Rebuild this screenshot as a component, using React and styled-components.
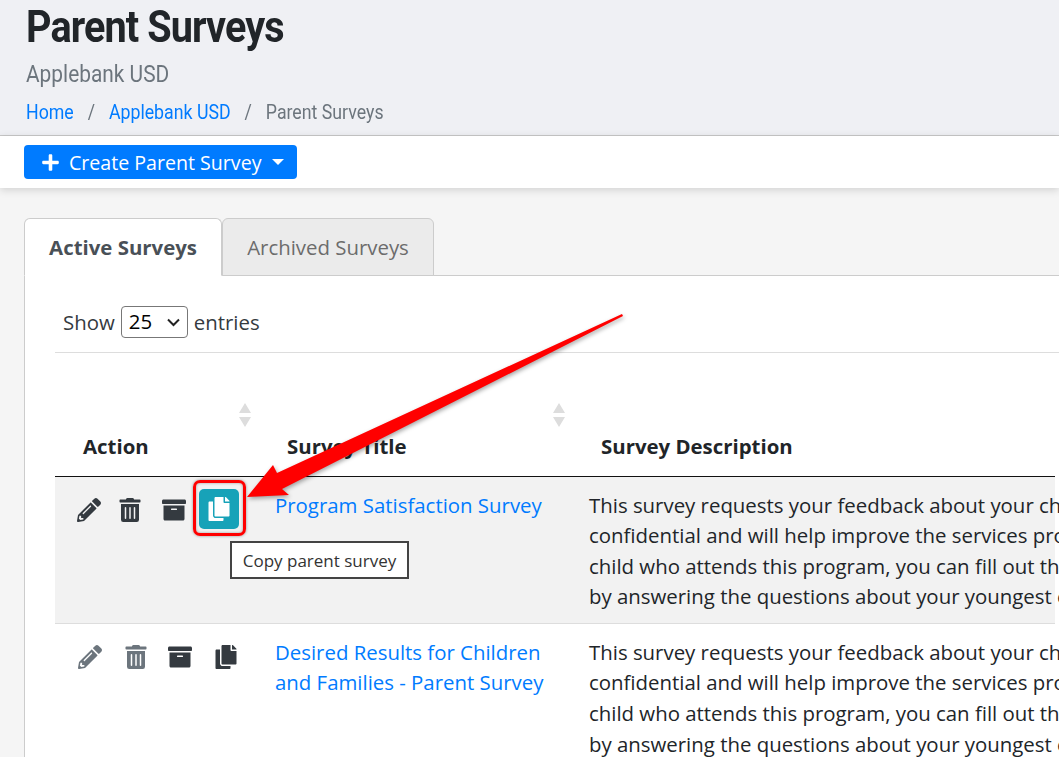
import React from 'react';
import styled, { createGlobalStyle } from 'styled-components';
import { FaPlus, FaPencilAlt, FaTrashAlt, FaArchive, FaCopy } from 'react-icons/fa';

const GlobalStyle = createGlobalStyle`
  html, body { margin: 0; padding: 0; background: #f5f5f5; }
  body { font-family: "Open Sans", "Liberation Sans", sans-serif; color: #212529; }
`;

const Page = styled.div`
  position: relative;
  width: 1059px;
  height: 757px;
  overflow: hidden;
  background: #f5f5f5;
`;

const Header = styled.header`
  height: 136px;
  box-sizing: border-box;
  padding: 0 26px;
  background: #eff0f4;
  border-bottom: 1px solid #c8c8c8;
  font-family: Roboto, sans-serif;
`;

const Title = styled.h1`
  margin: 0;
  padding-top: 1px;
  font-size: 45px;
  line-height: 52px;
  font-weight: 700;
  color: #212529;
  letter-spacing: -1px;
  transform: scaleX(0.88);
  transform-origin: left;
  white-space: nowrap;
`;

const Subtitle = styled.div`
  margin-top: 8px;
  font-size: 24px;
  line-height: 26px;
  color: #6c757d;
  transform: scaleX(0.87);
  transform-origin: left;
`;

const Crumbs = styled.nav`
  display: flex;
  margin-top: 13px;
  font-size: 20.4px;
  line-height: 24px;
  color: #6c757d;
  transform: scaleX(0.87);
  transform-origin: left;
  white-space: nowrap;
`;

const Crumb = styled.a`
  color: #007bff;
`;

const Sep = styled.span`
  padding: 0 16px;
`;

const Toolbar = styled.div`
  position: relative;
  height: 52px;
  box-sizing: border-box;
  padding: 9px 24px;
  background: #fff;
  box-shadow: 0 2px 8px rgba(0, 0, 0, 0.15);
`;

const CreateButton = styled.button`
  display: flex;
  align-items: center;
  width: 273px;
  height: 34px;
  padding: 0 0 0 17px;
  border: 0;
  border-radius: 4px;
  background: #007bff;
  color: #fff;
  font: 19.6px "Open Sans", sans-serif;
  svg { font-size: 19px; margin-right: 9px; }
`;

const Caret = styled.span`
  margin-left: 11px;
  border-top: 6px solid #fff;
  border-left: 6px solid transparent;
  border-right: 6px solid transparent;
`;

const Content = styled.main`
  padding: 30px 0 0 24px;
`;

const Tabs = styled.div`
  display: flex;
  position: relative;
  z-index: 1;
  margin-bottom: -1px;
`;

const Tab = styled.div`
  box-sizing: border-box;
  height: 58px;
  width: ${p => p.$w}px;
  margin-right: ${p => p.$gap || 0}px;
  display: flex;
  align-items: center;
  justify-content: center;
  font-size: 20.4px;
  border: 1px solid #ccc;
  border-radius: 6px 6px 0 0;
  color: ${p => (p.$active ? '#495057' : '#6c6c6c')};
  background: ${p => (p.$active ? '#fff' : '#ebebeb')};
  font-weight: ${p => (p.$active ? 700 : 400)};
  border-bottom-color: ${p => (p.$active ? '#fff' : '#ccc')};
`;

const Card = styled.section`
  box-sizing: border-box;
  height: 600px;
  padding: 0 0 0 30px;
  background: #fff;
  border: 1px solid #ccc;
  border-right: 0;
`;

const LengthRow = styled.div`
  box-sizing: border-box;
  height: 77px;
  padding: 16px 0 0 8px;
  display: flex;
  align-items: center;
  gap: 6px;
  font-size: 20.4px;
  color: #343a40;
  border-bottom: 1px solid #ddd;
`;

const LengthSelect = styled.div`
  position: relative;
  box-sizing: border-box;
  width: 67px;
  height: 32px;
  padding-left: 7px;
  border: 1px solid #777;
  border-radius: 4px;
  line-height: 29px;
  color: #000;
  svg { position: absolute; right: 6px; top: 11px; }
`;

const Table = styled.table`
  border-collapse: collapse;
  table-layout: fixed;
  width: 1000px;
`;

const HeadCell = styled.th`
  position: relative;
  height: 123px;
  box-sizing: border-box;
  vertical-align: bottom;
  padding: 0 0 16px ${p => p.$pad || 24}px;
  text-align: left;
  font-size: 20.4px;
  font-weight: 700;
  color: #212529;
  border-bottom: 1px solid #111;
`;

const SortIcon = styled.svg`
  position: absolute;
  right: 11px;
  top: 50px;
`;

const Row = styled.tr`
  background: ${p => (p.$striped ? '#f2f2f2' : '#fff')};
  border-bottom: 1px solid #ddd;
`;

const Cell = styled.td`
  vertical-align: top;
  padding: 13px 12px 11px;
  font-size: 20.4px;
  line-height: 30.6px;
  color: #212529;
  white-space: nowrap;
`;

const TitleLink = styled.a`
  color: #007bff;
`;

const Actions = styled.div`
  display: flex;
  align-items: center;
  height: 26px;
  margin: 7px 0 0 ${p => p.$offset}px;
`;

const ActionIcon = styled.span`
  display: flex;
  width: ${p => p.$w}px;
  color: ${p => (p.$muted ? '#6c757d' : '#343a40')};
  svg { font-size: 24px; }
`;

const CopyActive = styled.span`
  display: flex;
  flex: none;
  align-items: center;
  justify-content: center;
  width: 40px;
  height: 40px;
  margin-top: -1px;
  border-radius: 5px;
  background: #17a2b8;
  color: #fff;
  svg { font-size: 24px; }
`;

const Highlight = styled.div`
  position: absolute;
  left: 193px;
  top: 480px;
  width: 53px;
  height: 56px;
  box-sizing: border-box;
  border: 3px solid #f00;
  border-radius: 7px;
  box-shadow: 0 0 3px rgba(0, 0, 0, 0.4), inset 0 0 3px rgba(0, 0, 0, 0.35);
`;

const Tooltip = styled.div`
  position: absolute;
  left: 230px;
  top: 541px;
  width: 179px;
  height: 38px;
  box-sizing: border-box;
  display: flex;
  align-items: center;
  justify-content: center;
  border: 2px solid #444;
  background: #fff;
  font-size: 17px;
  color: #333;
`;

const Arrow = styled.svg`
  position: absolute;
  left: 0;
  top: 0;
  pointer-events: none;
  filter: drop-shadow(1px 2px 2px rgba(0, 0, 0, 0.35));
`;

const Sort = () => (
  <SortIcon width="14" height="24" viewBox="0 0 14 24">
    <path d="M7 0l6 10H1zM7 24l6-10H1z" fill="#ddd" />
  </SortIcon>
);

const Chevron = () => (
  <svg width="15" height="9" viewBox="0 0 15 9">
    <path d="M2 1.5l5.5 5.5L13 1.5" fill="none" stroke="#222" strokeWidth="2" />
  </svg>
);

const lines = [
  "This survey requests your feedback about your child's experience",
  'confidential and will help improve the services provided to your family',
  'child who attends this program, you can fill out this survey once',
  'by answering the questions about your youngest child in the program',
];

const Description = () => lines.map(l => <div key={l}>{l}</div>);

export default function App() {
  return (
    <Page>
      <GlobalStyle />
      <Header>
        <Title>Parent Surveys</Title>
        <Subtitle>Applebank USD</Subtitle>
        <Crumbs>
          <Crumb>Home</Crumb><Sep>/</Sep>
          <Crumb>Applebank USD</Crumb><Sep>/</Sep>
          <span>Parent Surveys</span>
        </Crumbs>
      </Header>
      <Toolbar>
        <CreateButton><FaPlus />Create Parent Survey<Caret /></CreateButton>
      </Toolbar>
      <Content>
        <Tabs>
          <Tab $active $w={198}>Active Surveys</Tab>
          <Tab $w={212}>Archived Surveys</Tab>
        </Tabs>
        <Card>
          <LengthRow>
            Show
            <LengthSelect>25<Chevron /></LengthSelect>
            entries
          </LengthRow>
          <Table>
            <colgroup>
              <col style={{ width: 208 }} />
              <col style={{ width: 314 }} />
              <col />
            </colgroup>
            <thead>
              <tr>
                <HeadCell $pad={28}>Action<Sort /></HeadCell>
                <HeadCell>Survey Title<Sort /></HeadCell>
                <HeadCell>Survey Description</HeadCell>
              </tr>
            </thead>
            <tbody>
              <Row $striped>
                <Cell>
                  <Actions $offset={10}>
                    <ActionIcon $w={41}><FaPencilAlt /></ActionIcon>
                    <ActionIcon $w={44}><FaTrashAlt /></ActionIcon>
                    <ActionIcon $w={37}><FaArchive /></ActionIcon>
                    <CopyActive><FaCopy /></CopyActive>
                  </Actions>
                </Cell>
                <Cell><TitleLink>Program Satisfaction Survey</TitleLink></Cell>
                <Cell><Description /></Cell>
              </Row>
              <Row>
                <Cell>
                  <Actions $offset={11}>
                    <ActionIcon $w={46} $muted><FaPencilAlt /></ActionIcon>
                    <ActionIcon $w={44} $muted><FaTrashAlt /></ActionIcon>
                    <ActionIcon $w={46}><FaArchive /></ActionIcon>
                    <ActionIcon $w={30}><FaCopy /></ActionIcon>
                  </Actions>
                </Cell>
                <Cell><TitleLink>Desired Results for Children<br />and Families - Parent Survey</TitleLink></Cell>
                <Cell><Description /></Cell>
              </Row>
            </tbody>
          </Table>
        </Card>
      </Content>
      <Highlight />
      <Tooltip>Copy parent survey</Tooltip>
      <Arrow width="1059" height="757" viewBox="0 0 1059 757">
        <path d="M622 314L277 473L273 465L247 497L289 495L282 489L623 316Z" fill="#f00" />
      </Arrow>
    </Page>
  );
}
